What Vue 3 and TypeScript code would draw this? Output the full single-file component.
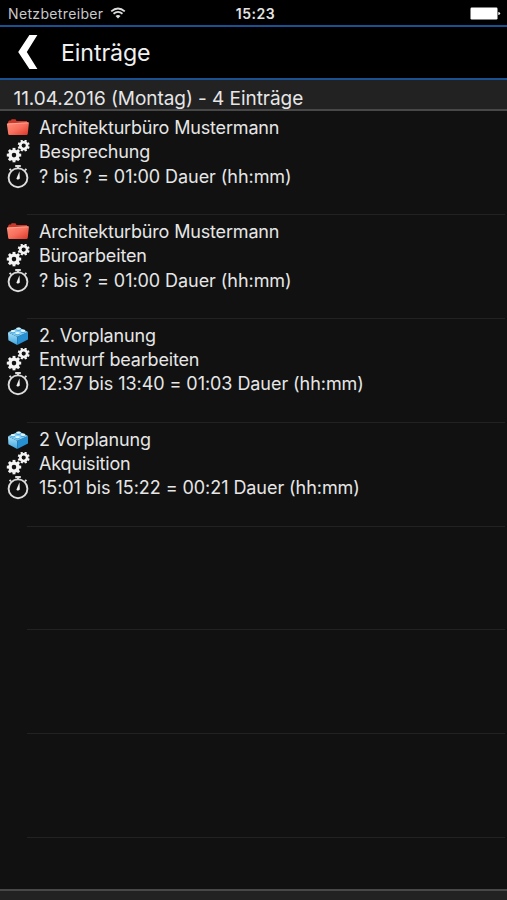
<script setup lang="ts">
interface Entry {
  kind: 'folder' | 'brick'
  project: string
  activity: string
  time: string
}

const entries: Entry[] = [
  { kind: 'folder', project: 'Architekturbüro Mustermann', activity: 'Besprechung', time: '? bis ? = 01:00 Dauer (hh:mm)' },
  { kind: 'folder', project: 'Architekturbüro Mustermann', activity: 'Büroarbeiten', time: '? bis ? = 01:00 Dauer (hh:mm)' },
  { kind: 'brick', project: '2. Vorplanung', activity: 'Entwurf bearbeiten', time: '12:37 bis 13:40 = 01:03 Dauer (hh:mm)' },
  { kind: 'brick', project: '2 Vorplanung', activity: 'Akquisition', time: '15:01 bis 15:22 = 00:21 Dauer (hh:mm)' },
]

const emptyRows = 3
const teeth = [0, 45, 90, 135, 180, 225, 270, 315]
</script>

<template>
  <div class="screen">
    <svg class="defs" width="0" height="0" aria-hidden="true">
      <defs>
        <linearGradient id="folderFront" x1="0" y1="0" x2="1" y2="1">
          <stop offset="0" stop-color="#ff907c" />
          <stop offset="0.5" stop-color="#f8705d" />
          <stop offset="1" stop-color="#dc3526" />
        </linearGradient>
        <linearGradient id="brickLeft" x1="0" y1="0" x2="0" y2="1">
          <stop offset="0" stop-color="#a9e2fb" />
          <stop offset="1" stop-color="#3fa5e0" />
        </linearGradient>
      </defs>
    </svg>

    <header class="status">
      <div class="carrier">
        <span class="carrier-name">Netzbetreiber</span>
        <svg class="wifi" width="16" height="12" viewBox="0 0 16 12">
          <path d="M1.2 4.4Q8-1.5 14.8 4.4" />
          <path d="M3.5 6.8Q8 3 12.5 6.8" />
          <path class="dot" d="M5.5 8.9Q8 7 10.5 8.9L8 11.5Z" />
        </svg>
      </div>
      <span class="clock">15:23</span>
      <svg class="battery" width="31" height="13" viewBox="0 0 31 13">
        <rect x="0.5" y="0.5" width="27" height="12" rx="1.2" />
        <path d="M28.3 5Q30.2 5.2 30.2 6.5T28.3 8Z" />
      </svg>
    </header>

    <nav class="navbar">
      <svg class="back" width="20" height="36" viewBox="0 0 20 36">
        <path d="M11.4 1H19.4L8.8 18L19.4 35H11.4L.2 18Z" />
      </svg>
      <h1 class="title">Einträge</h1>
    </nav>

    <div class="section"><span class="section-text">11.04.2016 (Montag) - 4 Einträge</span></div>

    <main class="list">
      <article v-for="(e, i) in entries" :key="i" class="row">
        <div class="line">
          <svg v-if="e.kind === 'folder'" class="icon" viewBox="0 0 24 24">
            <path d="M2 6L3.2 4.5H5L5.5 3.2H9.5L10.5 5H21V18H2.5Z" fill="#c9382b" />
            <path d="M.9 8.2Q.8 7.5 1.5 7.4L22 6.2Q23 6.2 22.9 7.2L21.7 18Q21.5 19 20.5 19H3.3Q2.4 19 2.3 18.2Z" fill="url(#folderFront)" />
            <path d="M1.4 8L22.3 6.8" stroke="#ffb09e" stroke-width=".7" />
          </svg>
          <svg v-else class="icon" viewBox="0 0 24 24">
            <path d="M2 8.2L11.2 12.8V21L2.4 16.2Z" fill="url(#brickLeft)" />
            <path d="M11.2 12.8L22 8V15.6L11.2 21Z" fill="#2790d3" />
            <path d="M2 8.2L13 3.6L22 8L11.2 12.8Z" fill="#83cdf4" />
            <g fill="#48a9df">
              <ellipse cx="7" cy="8.1" rx="2.4" ry="1.4" />
              <ellipse cx="12.5" cy="5.6" rx="2.4" ry="1.4" />
              <ellipse cx="11.5" cy="10.1" rx="2.4" ry="1.4" />
              <ellipse cx="17" cy="7.8" rx="2.4" ry="1.4" />
            </g>
            <g fill="#dcf5ff">
              <ellipse cx="7" cy="7.1" rx="2.3" ry="1.2" />
              <ellipse cx="12.5" cy="4.6" rx="2.3" ry="1.2" />
              <ellipse cx="11.5" cy="9.1" rx="2.3" ry="1.2" />
              <ellipse cx="17" cy="6.8" rx="2.3" ry="1.2" />
            </g>
          </svg>
          <span class="text">{{ e.project }}</span>
        </div>
        <div class="line">
          <svg class="icon" viewBox="0 0 24 24">
            <g class="gear" transform="translate(8 15.1)">
              <circle r="4" stroke-width="3.4" />
              <path v-for="a in teeth" :key="a" d="M0-5V-7.2" stroke-width="2.9" :transform="`rotate(${a})`" />
            </g>
            <g class="gear" transform="translate(17.7 5.6)">
              <circle r="3.4" stroke-width="2.6" />
              <path v-for="a in teeth" :key="a" d="M0-4V-6" stroke-width="2.3" :transform="`rotate(${a + 22})`" />
            </g>
          </svg>
          <span class="text">{{ e.activity }}</span>
        </div>
        <div class="line">
          <svg class="icon" viewBox="0 0 24 24">
            <g class="watch">
              <circle cx="12" cy="12.8" r="9.4" />
              <path d="M12 4V2M19 5.3L20.4 3.9M5 5.3L3.6 3.9" />
              <path d="M9.2 1.1H14.8" stroke-width="2.2" />
            </g>
            <path d="M13.5 6.3L13.8 13.5Q12.2 15.5 10.4 13.7Z" fill="#f4f4f4" />
          </svg>
          <span class="text time">{{ e.time }}</span>
        </div>
      </article>
      <div v-for="n in emptyRows" :key="`empty-${n}`" class="row" />
    </main>

    <footer class="toolbar" />
  </div>
</template>

<style>
body {
  margin: 0;
  background: #111;
}
</style>

<style scoped>
.screen {
  display: flex;
  flex-direction: column;
  width: 507px;
  height: 900px;
  overflow: hidden;
  background: #111;
  color: #e6e6e6;
  font-family: Inter, "Liberation Sans", sans-serif;
}
.defs {
  position: absolute;
}
.status {
  flex: none;
  display: grid;
  grid-template-columns: 1fr auto 1fr;
  align-items: center;
  box-sizing: border-box;
  height: 25px;
  padding: 2px 6px 0 8px;
  background: #000;
}
.carrier {
  display: flex;
  align-items: center;
  gap: 7px;
}
.carrier-name {
  font-size: 14px;
  line-height: 18px;
  letter-spacing: 0.35px;
  color: #c9c9c9;
}
.wifi {
  fill: none;
  stroke: #ddd;
  stroke-width: 1.8;
  margin-top: -2px;
}
.wifi .dot {
  fill: #ddd;
  stroke: none;
}
.clock {
  padding-left: 2px;
  font-size: 14px;
  line-height: 18px;
  font-weight: 600;
  letter-spacing: 0.5px;
  color: #e4e4e4;
}
.battery {
  justify-self: end;
  fill: #fff;
}
.navbar {
  flex: none;
  display: flex;
  align-items: center;
  box-sizing: border-box;
  height: 55px;
  padding-left: 18px;
  gap: 23px;
  border-top: 2px solid #1a5193;
  border-bottom: 2px solid #1a5193;
  background: #000;
}
.back {
  margin-bottom: 1px;
  fill: #fff;
}
.title {
  margin: 0;
  font-size: 23.2px;
  line-height: 30px;
  font-weight: 400;
  letter-spacing: -0.1px;
  color: #f0f0f0;
}
.section {
  flex: none;
  box-sizing: border-box;
  height: 31px;
  padding: 7px 0 0 13.5px;
  border-bottom: 2px solid #484848;
  background: #222;
}
.section-text {
  display: block;
  font-size: 19px;
  line-height: 24px;
  letter-spacing: -0.05px;
  white-space: nowrap;
}
.list {
  flex: none;
  height: 778px;
}
.row {
  box-sizing: border-box;
  height: 103.9px;
  padding: 4.7px 0 0 6px;
  background: linear-gradient(#222, #222) 27px 100% / 478px 1px no-repeat;
}
.line {
  display: flex;
  align-items: center;
  gap: 9px;
  height: 24.4px;
}
.icon {
  flex: none;
  width: 24px;
  height: 24px;
}
.text {
  font-size: 18px;
  line-height: 24px;
  letter-spacing: -0.17px;
  white-space: nowrap;
}
.time {
  letter-spacing: -0.06px;
}
.gear {
  fill: none;
  stroke: #f4f4f4;
}
.watch {
  fill: none;
  stroke: #ddd;
  stroke-width: 1.9;
}
.toolbar {
  flex: none;
  height: 11px;
  border-top: 2px solid #484848;
  box-sizing: border-box;
  background: #222;
}
</style>
